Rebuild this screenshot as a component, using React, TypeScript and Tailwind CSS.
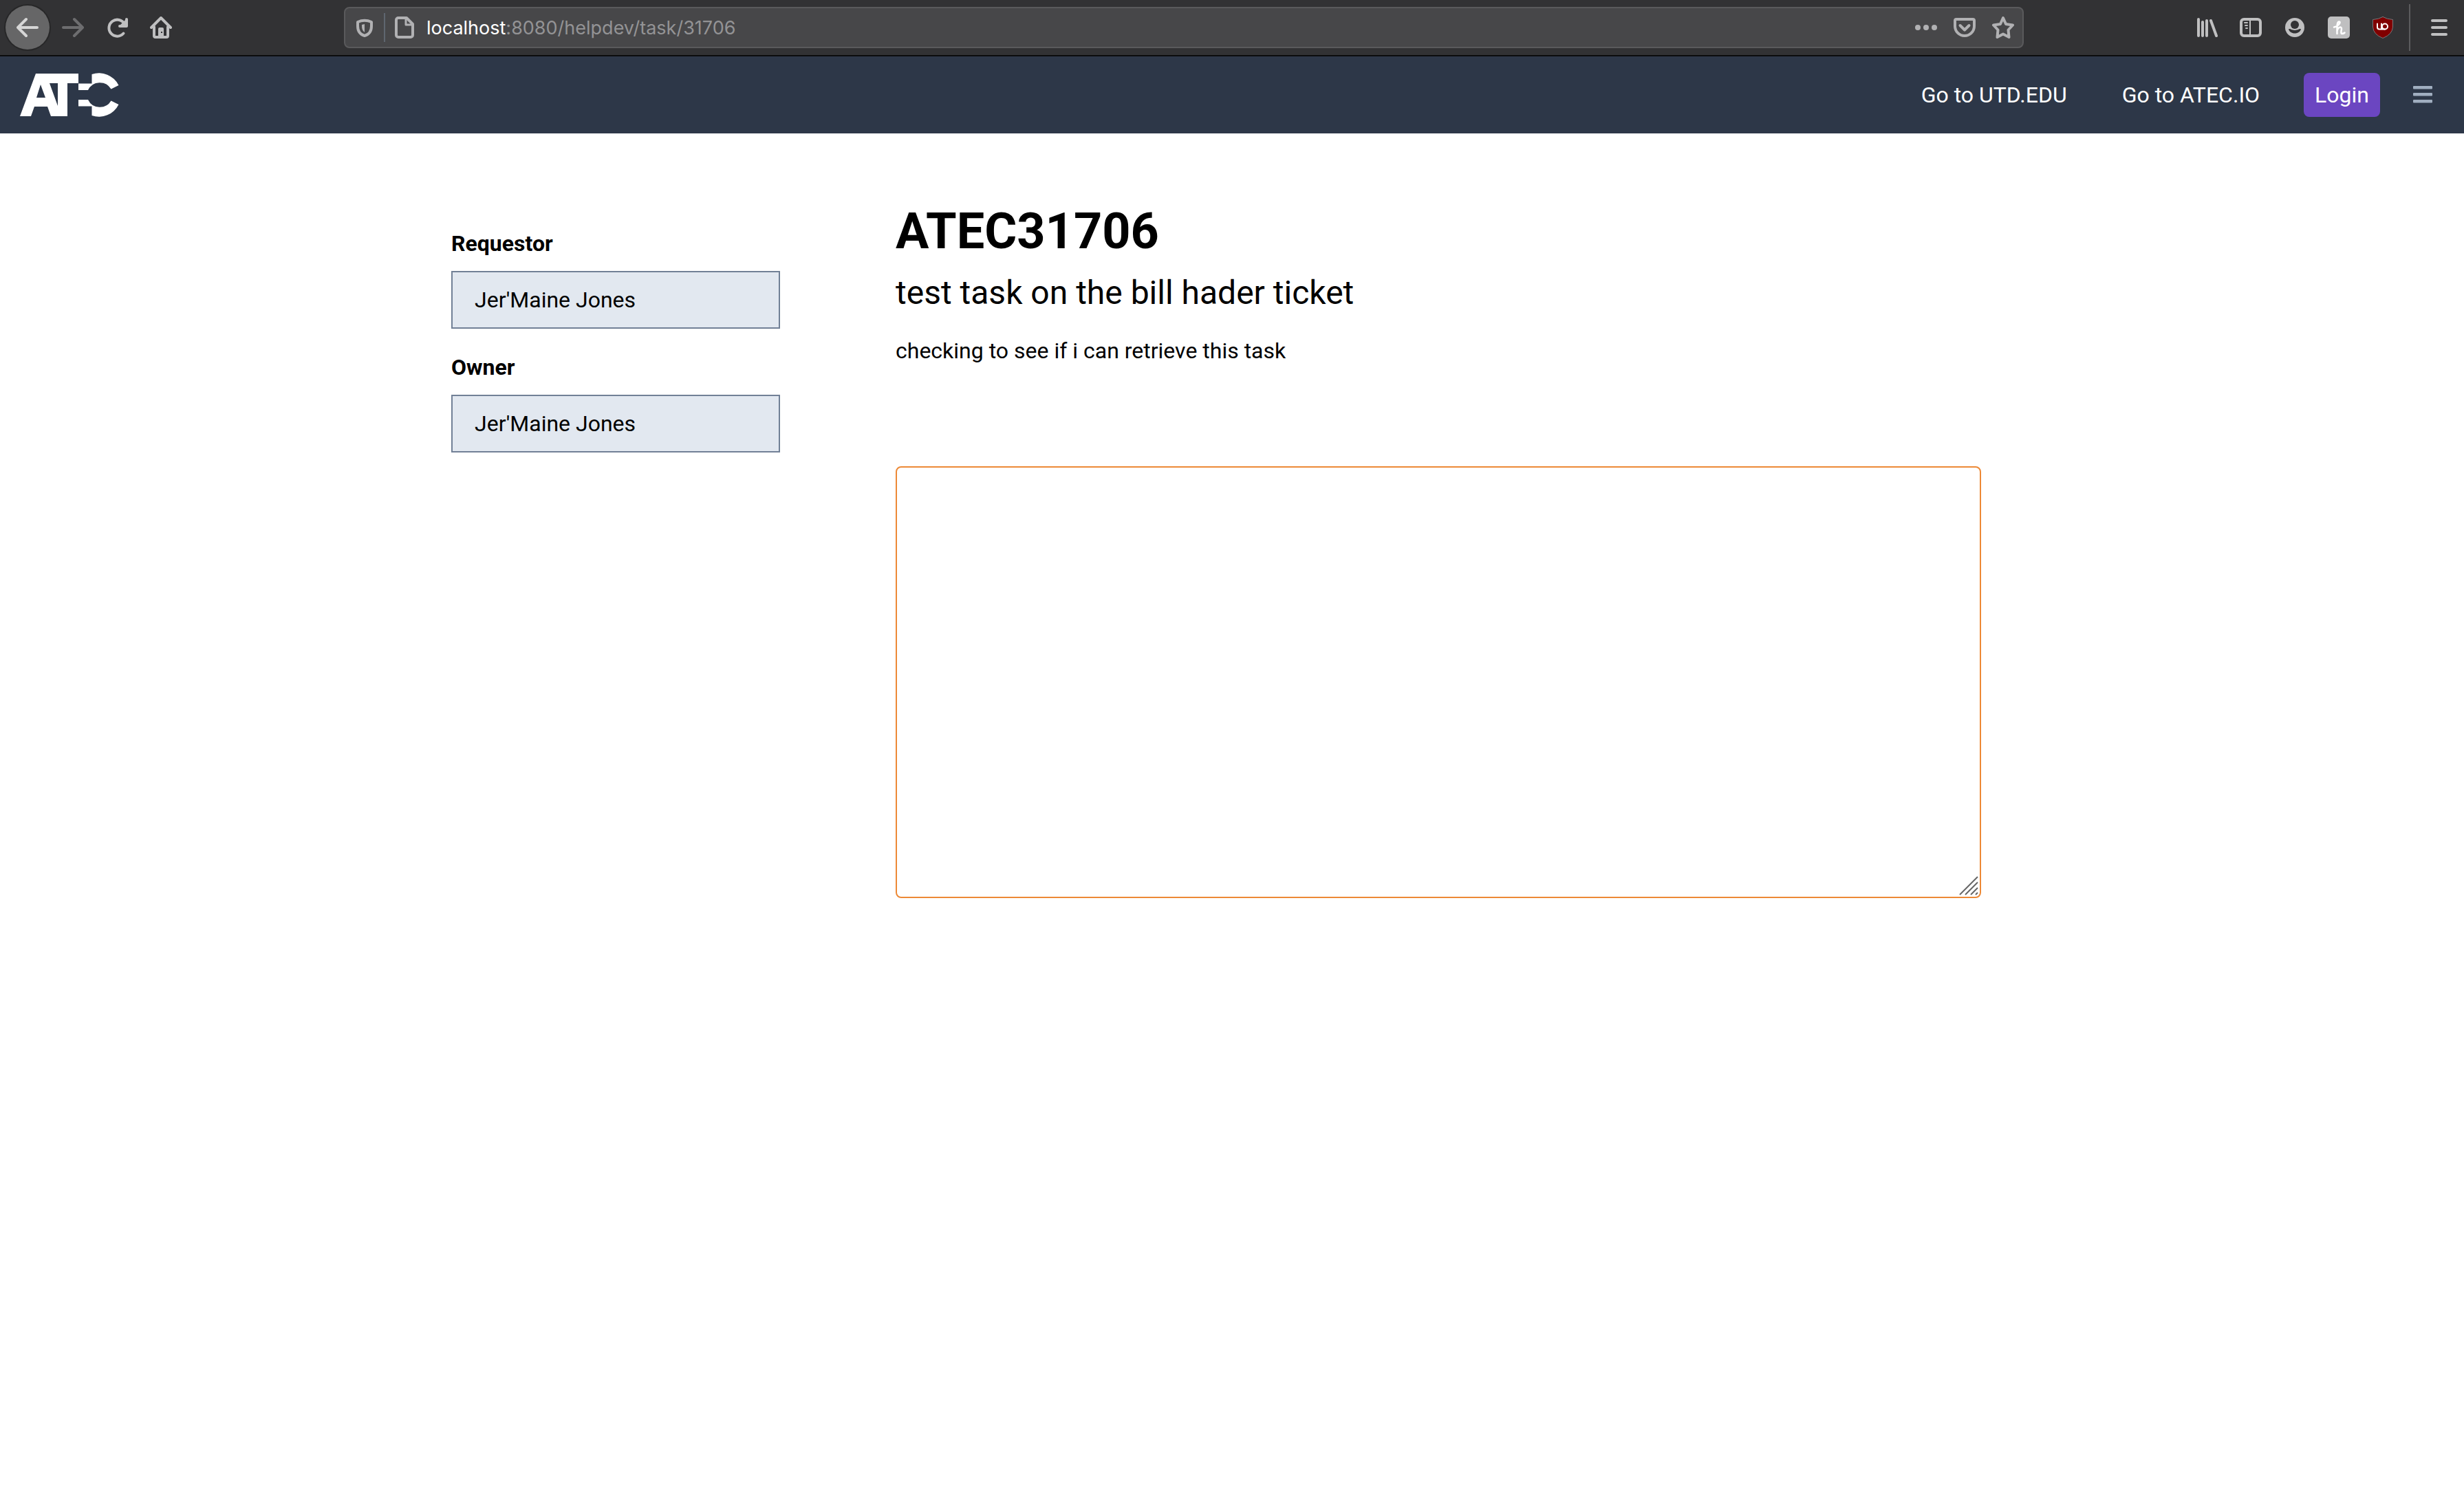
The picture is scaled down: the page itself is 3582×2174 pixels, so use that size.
import type { ReactNode } from "react";

const iconButton = "flex h-16 w-16 shrink-0 items-center justify-center";
const fieldButton = "flex h-8 w-8 items-center justify-center";

function Icon({ children }: { children: ReactNode }) {
  return (
    <svg viewBox="0 0 32 32" className="h-8 w-8" fill="none" stroke="currentColor" strokeWidth="4" strokeLinecap="round" strokeLinejoin="round" aria-hidden="true">
      {children}
    </svg>
  );
}

function BrowserToolbar() {
  return (
    <div className="flex h-[82px] items-center border-b-2 border-[#0c0c0d] bg-[#323234] pl-2 pr-1 text-[#bfbfc0]">
      <button aria-label="Back" className="flex h-16 w-16 shrink-0 items-center justify-center rounded-full bg-[#666667] text-[#d6d6d6] ring-2 ring-[#272728]">
        <Icon><path d="M2 16H30M14 4L2 16L14 28" /></Icon>
      </button>
      <button aria-label="Forward" className="ml-0.5 flex h-16 w-16 shrink-0 items-center justify-center text-[#6d6d6f]">
        <Icon><path d="M2 16H30M18 4L30 16L18 28" /></Icon>
      </button>
      <button aria-label="Reload" className={iconButton}>
        <Icon>
          <path d="M25.5 24.5A12 12 0 1 1 27 11" />
          <path d="M30 4V14H20M30 14L22 14L30 6" />
        </Icon>
      </button>
      <button aria-label="Home" className={iconButton}>
        <Icon>
          <path d="M2 16L16 2L30 16" />
          <path d="M6 15V28A2 2 0 0 0 8 30H24A2 2 0 0 0 26 28V15" />
          <path d="M12 30V18A2 2 0 0 1 14 16H18A2 2 0 0 1 20 18V30Z" fill="currentColor" stroke="none" />
          <path d="M16 22H18V24H16Z" fill="#323234" stroke="none" />
        </Icon>
      </button>

      <div className="ml-[234px] flex h-15 flex-1 items-center rounded-lg border-2 border-[#5a5a5c] bg-[#474749] px-3 text-[#b1b1b3]">
        <button aria-label="Tracking protection" className={fieldButton}>
          <Icon>
            <path d="M6 8Q16 3.500 26 8V14Q26 25 16 28Q6 25 6 14Z" />
            <path d="M16 11V23Q11.500 20 12 12Z" fill="currentColor" stroke="none" />
          </Icon>
        </button>
        <span className="ml-3 h-[42px] w-0.5 bg-[#5f6670]" />
        <button aria-label="Site information" className="ml-3 flex h-8 w-8 items-center justify-center">
          <Icon>
            <path d="M8 2H19L28 11V27A3 3 0 0 1 25 30H7A3 3 0 0 1 4 27V5A3 3 0 0 1 7 2Z" />
            <path d="M18 3V12H27" strokeWidth="3" />
          </Icon>
        </button>
        <div className="relative ml-4 flex-1 pt-0.5 font-[Inter,sans-serif] text-[27px] leading-10 text-[#939395]">
          <div aria-hidden="true"><span className="text-white">localhost</span>:8080/helpdev/task/31706</div>
          <input aria-label="Address" type="text" className="absolute inset-0 w-full bg-transparent outline-none" />
        </div>
        <div className="flex gap-6">
          <button aria-label="Page actions" className={fieldButton}>
            <Icon><g fill="currentColor" stroke="none"><circle cx="4" cy="16" r="4" /><circle cx="16" cy="16" r="4" /><circle cx="28" cy="16" r="4" /></g></Icon>
          </button>
          <button aria-label="Save to Pocket" className={fieldButton}>
            <Icon>
              <path d="M4 4H28A2 2 0 0 1 30 6V14A14 14 0 0 1 2 14V6A2 2 0 0 1 4 4Z" />
              <path d="M9.500 13L16 19.500L22.500 13" />
            </Icon>
          </button>
          <button aria-label="Bookmark this page" className={fieldButton}>
            <Icon><path d="M16 2L20 11L30 12.500L23.500 19.500L24.500 30L16 25.500L7.500 30L8.500 19.500L2 12.500L12 11Z" /></Icon>
          </button>
        </div>
      </div>

      <div className="ml-[234px] flex items-center">
        <button aria-label="Library" className={iconButton}>
          <Icon><path d="M4 4V28M10 8V28M16 6V28M22 6L30 28" /></Icon>
        </button>
        <button aria-label="Sidebars" className={iconButton}>
          <Icon>
            <rect x="2" y="4" width="28" height="24" rx="4" />
            <path d="M15 4V28" strokeWidth="2" />
            <path d="M7 9H11M8 13H11M9 17H11" strokeWidth="2" />
          </Icon>
        </button>
        <button aria-label="Account" className={iconButton}>
          <Icon>
            <circle cx="16" cy="16" r="14" fill="currentColor" stroke="none" />
            <circle cx="16" cy="12" r="6" fill="#323234" stroke="none" />
            <path d="M7 18.500C9 17 10.500 20 16 20C21.500 20 23 17 25 18.500C24 22 20.500 24.500 16 24.500C11.500 24.500 8 22 7 18.500Z" fill="#323234" stroke="none" />
          </Icon>
        </button>
        <button aria-label="Honey" className={iconButton}>
          <Icon>
            <rect width="32" height="32" rx="5" fill="currentColor" stroke="none" />
            <path d="M9 15.500C16 14.500 19.500 7.500 16.500 7.500C13 7.500 13.500 14 13.500 25M13.500 21C15 14.500 20.500 14 20 18.500C19 22.500 19 25 21 25Q23 25 24.500 23.500" stroke="#fff" strokeWidth="2.500" />
          </Icon>
        </button>
        <button aria-label="uBlock Origin" className={iconButton}>
          <Icon>
            <path d="M16 .5Q22 4 30.500 4.500V15Q30 26 16 31.500Q2 26 1.500 15V4.500Q10 4 16 .5Z" fill="#800000" stroke="#77777a" strokeWidth="1" />
            <path d="M8 10.500V15.500A3 3 0 0 0 11 18.500H19M14 10.500V18" stroke="#fff" strokeWidth="2" />
            <circle cx="19" cy="14.500" r="4" stroke="#fff" strokeWidth="2" />
          </Icon>
        </button>
      </div>
      <span className="ml-1.5 h-[68px] w-0.5 shrink-0 bg-[#5c5c5e]" />
      <button aria-label="Open menu" className="ml-2.5 flex h-16 w-16 shrink-0 items-center justify-center">
        <Icon><path d="M6 6H26M6 16H26M6 26H26" /></Icon>
      </button>
    </div>
  );
}

function SiteHeader() {
  return (
    <header className="flex h-28 items-center bg-[#2d3748] pl-7 pr-[46px] text-[32px] leading-12 text-white">
      <a href="#" aria-label="ATEC home">
        <svg viewBox="0 0 146 64" className="h-16 w-[146px]" fill="currentColor" aria-hidden="true">
          <path fillRule="evenodd" d="M24 1H86V15H70V63H46L41 49H22L17 63H1ZM31 17L25 36H38ZM44 15L56 48V15Z" />
          <path d="M86 15.500H105.500V2A32 32 0 0 1 144.500 18L133.500 23.500A19 19 0 0 0 100 25H86Z" />
          <path d="M86 39H100A19 19 0 0 0 133.500 40.500L144.500 46A32 32 0 0 1 105.500 62V48.500H86Z" />
        </svg>
      </a>
      <nav className="ml-auto flex items-center">
        <a href="#">Go to UTD.EDU</a>
        <a href="#" className="ml-20">Go to ATEC.IO</a>
        <button className="ml-16 rounded-lg bg-[#6b46c1] px-4 py-2">Login</button>
        <button aria-label="Toggle menu" className="ml-12 text-[#a0aec0]">
          <svg viewBox="0 0 28 28" className="h-7 w-7" fill="currentColor" aria-hidden="true">
            <rect y="1" width="28" height="4.500" rx="1" />
            <rect y="11" width="28" height="4.500" rx="1" />
            <rect y="21" width="28" height="4.500" rx="1" />
          </svg>
        </button>
      </nav>
    </header>
  );
}

function PersonField({ id, label, name }: { id: string; label: string; name: string }) {
  return (
    <div className="flex flex-col gap-4">
      <label htmlFor={id} className="font-bold">{label}</label>
      <input id={id} type="text" readOnly defaultValue={name} className="w-full border-2 border-[#718096] bg-[#e2e8f0] px-8 py-4 outline-none" />
    </div>
  );
}

export default function App() {
  return (
    <div className="min-h-screen bg-white font-[Roboto,sans-serif] text-black">
      <BrowserToolbar />
      <SiteHeader />
      <main className="mx-auto flex max-w-[2560px] gap-[168px] pl-[145px] pr-[191px] text-[32px] leading-12">
        <aside className="flex w-[478px] shrink-0 flex-col gap-8 pt-[136px]">
          <PersonField id="requestor" label="Requestor" name="Jer'Maine Jones" />
          <PersonField id="owner" label="Owner" name="Jer'Maine Jones" />
        </aside>
        <section className="min-w-0 flex-1 pt-[98px]">
          <h1 className="text-[72px] font-bold leading-[90px]">ATEC31706</h1>
          <h2 className="mt-2 text-[48px] leading-[72px]">test task on the bill hader ticket</h2>
          <p className="mt-6">checking to see if i can retrieve this task</p>
          <div className="relative mt-36">
            <textarea aria-label="Comment" className="block h-[628px] w-full resize-none rounded-lg border-2 border-[#ed8936] bg-white p-4 outline-none" />
            <svg viewBox="0 0 28 28" className="pointer-events-none absolute bottom-1 right-1 h-7 w-7" fill="none" stroke="#666" strokeWidth="2" aria-hidden="true">
              <path d="M1 27L27 1M9 27L27 9M17 27L27 17M24 27L27 24" />
            </svg>
          </div>
        </section>
      </main>
    </div>
  );
}
